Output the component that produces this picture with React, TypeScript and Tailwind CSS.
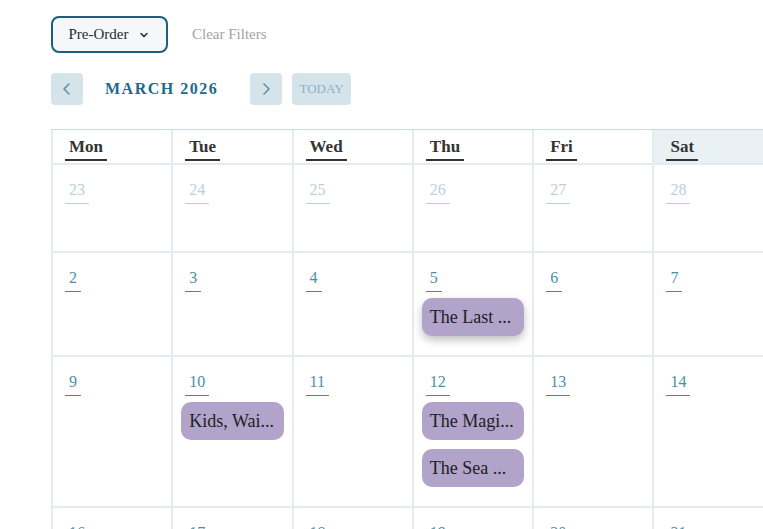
import React from 'react';

type Day = { n: number; muted?: boolean; events?: string[]; hover?: boolean };

const weekdays = ['Mon', 'Tue', 'Wed', 'Thu', 'Fri', 'Sat', 'Sun'];

const weeks: Day[][] = [
    [{ n: 23, muted: true }, { n: 24, muted: true }, { n: 25, muted: true }, { n: 26, muted: true }, { n: 27, muted: true }, { n: 28, muted: true }, { n: 1 }],
    [{ n: 2 }, { n: 3 }, { n: 4 }, { n: 5, events: ['The Last ...'], hover: true }, { n: 6 }, { n: 7 }, { n: 8 }],
    [{ n: 9 }, { n: 10, events: ['Kids, Wai...'] }, { n: 11 }, { n: 12, events: ['The Magi...', 'The Sea ...'] }, { n: 13 }, { n: 14 }, { n: 15 }],
    [{ n: 16 }, { n: 17 }, { n: 18 }, { n: 19 }, { n: 20 }, { n: 21 }, { n: 22 }],
];

const serif = "font-['Liberation_Serif','DejaVu_Serif',serif]";

const Chevron = ({ dir }: { dir: 'left' | 'right' | 'down' }) => {
    const d = dir === 'left' ? 'M10 3 L5 8 L10 13' : dir === 'right' ? 'M6 3 L11 8 L6 13' : 'M4 6 L8 10 L12 6';
    return (
        <svg width={dir === 'down' ? 12 : 16} height={dir === 'down' ? 12 : 16} viewBox="0 0 16 16" fill="none" stroke="currentColor" strokeWidth={dir === 'down' ? 2 : 1.6} strokeLinecap="round" strokeLinejoin="round">
            <path d={d} />
        </svg>
    );
};

const DayCell = ({ day }: { day: Day }) => (
    <div className="min-h-[88px] border-r-2 border-b-2 border-[#e3ecf1] px-2 pt-[11px] pb-[19px]">
        <div className="flex">
            <span className={`ml-1 px-1 border-b leading-[27px] text-[16px] ${serif} ${day.muted ? 'text-[#b9d0da] border-[#b9d0da]' : 'text-[#4b8fa7] border-[#3f88a3]'}`}>
                {day.n}
            </span>
        </div>
        {day.events && (
            <div className="mt-[6px] flex flex-col gap-[9px]">
                {day.events.map(ev => (
                    <div key={ev} className={`h-[38px] rounded-[10px] bg-[#b1a3c9] px-2 flex items-center text-[18px] text-[#1e1e24] whitespace-nowrap overflow-hidden ${serif} ${day.hover ? 'shadow-[0_4px_8px_rgba(0,0,0,0.25)]' : ''}`}>
                        {ev}
                    </div>
                ))}
            </div>
        )}
    </div>
);

export default function App() {
    return (
        <div className="w-screen h-screen overflow-hidden bg-white">
            <div className="pl-[51px] pt-4">
                <div className="flex items-center gap-[24px]">
                    <button className={`h-[37px] w-[117px] rounded-[8px] border-2 border-[#1c5f7c] bg-[#f5f8fa] flex items-center justify-center gap-[10px] text-[15px] text-[#2a2a2a] ${serif}`}>
                        Pre-Order
                        <span className="text-[#2a2a2a]"><Chevron dir="down" /></span>
                    </button>
                    <span className={`text-[15px] text-[#a3a3a3] ${serif}`}>Clear Filters</span>
                </div>

                <div className="mt-[20px] flex items-center">
                    <button className="w-[32px] h-[32px] rounded-[4px] bg-[#d5e4eb] text-[#5d93a8] flex items-center justify-center">
                        <Chevron dir="left" />
                    </button>
                    <span className={`ml-[22px] w-[145px] text-[16px] font-bold tracking-[1.5px] text-[#1d6b8c] ${serif}`}>MARCH 2026</span>
                    <button className="w-[32px] h-[32px] rounded-[4px] bg-[#d5e4eb] text-[#5d93a8] flex items-center justify-center">
                        <Chevron dir="right" />
                    </button>
                    <button className={`ml-[10px] w-[59px] h-[32px] rounded-[4px] bg-[#d5e4eb] text-[#8db2c3] text-[13px] ${serif}`}>
                        TODAY
                    </button>
                </div>

                <div className="mt-[24px] w-[844px] grid grid-cols-7 border-l-2 border-t border-l-[#e3ecf1] border-t-[#c9d9e2]">
                    {weekdays.map((w, i) => (
                        <div key={w} className={`h-[35px] border-r-2 border-b-2 border-[#e3ecf1] px-2 flex items-center ${i === 5 ? 'bg-[#e9f1f5]' : ''}`}>
                            <span className={`ml-1 px-1 border-b-2 border-[#333] leading-[24px] pt-[2px] text-[17px] font-bold text-[#333] ${serif}`}>{w}</span>
                        </div>
                    ))}
                    {weeks.map((week, wi) => week.map((day, di) => (
                        <DayCell key={`${wi}-${di}`} day={day} />
                    )))}
                </div>
            </div>
        </div>
    );
}
